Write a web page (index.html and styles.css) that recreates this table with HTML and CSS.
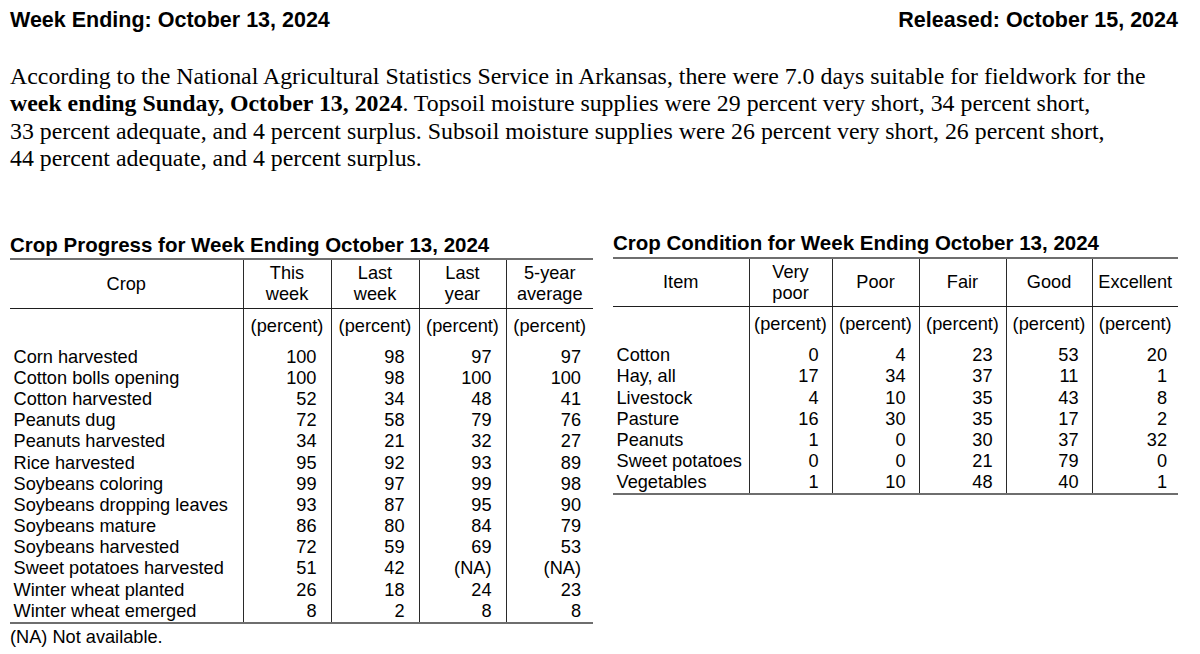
FILE: index.html
```html
<!DOCTYPE html>
<html lang="en">
<head>
<meta charset="utf-8">
<title>Arkansas Crop Progress</title>
<link rel="stylesheet" href="styles.css">
</head>
<body>
<div class="page">
  <header class="top">
    <div>Week Ending: October 13, 2024</div>
    <div>Released: October 15, 2024</div>
  </header>

  <p class="summary">According to the National Agricultural Statistics Service in Arkansas, there were 7.0 days suitable for fieldwork for the<br><b>week ending Sunday, October 13, 2024</b>. Topsoil moisture supplies were 29 percent very short, 34 percent short,<br>33 percent adequate, and 4 percent surplus. Subsoil moisture supplies were 26 percent very short, 26 percent short,<br>44 percent adequate, and 4 percent surplus.</p>

  <div class="tables">
    <section class="block block-progress">
      <h2 class="tbl-title">Crop Progress for Week Ending October 13, 2024</h2>
      <table class="tbl tbl-progress">
        <colgroup>
          <col class="c-name-l"><col class="c-num-l"><col class="c-num-l"><col class="c-num-l2"><col class="c-num-l2">
        </colgroup>
        <thead>
          <tr class="head">
            <th>Crop</th><th>This<br>week</th><th>Last<br>week</th><th>Last<br>year</th><th>5-year<br>average</th>
          </tr>
          <tr class="unit">
            <th></th><th>(percent)</th><th>(percent)</th><th>(percent)</th><th>(percent)</th>
          </tr>
        </thead>
        <tbody>
          <tr><td>Corn harvested</td><td>100</td><td>98</td><td>97</td><td>97</td></tr>
          <tr><td>Cotton bolls opening</td><td>100</td><td>98</td><td>100</td><td>100</td></tr>
          <tr><td>Cotton harvested</td><td>52</td><td>34</td><td>48</td><td>41</td></tr>
          <tr><td>Peanuts dug</td><td>72</td><td>58</td><td>79</td><td>76</td></tr>
          <tr><td>Peanuts harvested</td><td>34</td><td>21</td><td>32</td><td>27</td></tr>
          <tr><td>Rice harvested</td><td>95</td><td>92</td><td>93</td><td>89</td></tr>
          <tr><td>Soybeans coloring</td><td>99</td><td>97</td><td>99</td><td>98</td></tr>
          <tr><td>Soybeans dropping leaves</td><td>93</td><td>87</td><td>95</td><td>90</td></tr>
          <tr><td>Soybeans mature</td><td>86</td><td>80</td><td>84</td><td>79</td></tr>
          <tr><td>Soybeans harvested</td><td>72</td><td>59</td><td>69</td><td>53</td></tr>
          <tr><td>Sweet potatoes harvested</td><td>51</td><td>42</td><td>(NA)</td><td>(NA)</td></tr>
          <tr><td>Winter wheat planted</td><td>26</td><td>18</td><td>24</td><td>23</td></tr>
          <tr class="last"><td>Winter wheat emerged</td><td>8</td><td>2</td><td>8</td><td>8</td></tr>
        </tbody>
      </table>
      <p class="note">(NA) Not available.</p>
    </section>

    <section class="block block-condition">
      <h2 class="tbl-title">Crop Condition for Week Ending October 13, 2024</h2>
      <table class="tbl tbl-condition">
        <colgroup>
          <col class="c-name-r"><col class="c-num-r1"><col class="c-num-r2"><col class="c-num-r2"><col class="c-num-r3"><col class="c-num-r3">
        </colgroup>
        <thead>
          <tr class="head">
            <th>Item</th><th>Very<br>poor</th><th>Poor</th><th>Fair</th><th>Good</th><th>Excellent</th>
          </tr>
          <tr class="unit">
            <th></th><th>(percent)</th><th>(percent)</th><th>(percent)</th><th>(percent)</th><th>(percent)</th>
          </tr>
        </thead>
        <tbody>
          <tr><td>Cotton</td><td>0</td><td>4</td><td>23</td><td>53</td><td>20</td></tr>
          <tr><td>Hay, all</td><td>17</td><td>34</td><td>37</td><td>11</td><td>1</td></tr>
          <tr><td>Livestock</td><td>4</td><td>10</td><td>35</td><td>43</td><td>8</td></tr>
          <tr><td>Pasture</td><td>16</td><td>30</td><td>35</td><td>17</td><td>2</td></tr>
          <tr><td>Peanuts</td><td>1</td><td>0</td><td>30</td><td>37</td><td>32</td></tr>
          <tr><td>Sweet potatoes</td><td>0</td><td>0</td><td>21</td><td>79</td><td>0</td></tr>
          <tr class="last"><td>Vegetables</td><td>1</td><td>10</td><td>48</td><td>40</td><td>1</td></tr>
        </tbody>
      </table>
    </section>
  </div>
</div>
</body>
</html>
```

FILE: styles.css
```css
html, body {
  margin: 0;
  padding: 0;
  background: #ffffff;
}

body {
  font-family: "Liberation Sans", Arial, sans-serif;
  color: #000000;
}

.page {
  padding: 8px 22px 0 10px;
}

.top {
  display: flex;
  justify-content: space-between;
  font-weight: bold;
  font-size: 21.5px;
  line-height: 24px;
}

.summary {
  font-family: "Liberation Serif", "Times New Roman", serif;
  font-size: 23.85px;
  line-height: 27.3px;
  margin: 31px 0 0;
  white-space: nowrap;
}

.tables {
  display: flex;
  align-items: flex-start;
  gap: 20px;
  margin-top: 59px;
}

.block-progress {
  padding-top: 1.5px;
}

.tbl-title {
  margin: 0 0 2.5px;
  font-size: 20.5px;
  line-height: 23px;
  font-weight: bold;
  white-space: nowrap;
}

.tbl {
  border-collapse: collapse;
  table-layout: fixed;
  font-size: 18.2px;
  line-height: 21.17px;
}

.tbl-progress { width: 583px; }
.tbl-condition { width: 565px; }

.c-name-l { width: 233px; }
.c-num-l { width: 88px; }
.c-num-l2 { width: 87px; }

.c-name-r { width: 136px; }
.c-num-r1 { width: 83px; }
.c-num-r2 { width: 87px; }
.c-num-r3 { width: 86px; }

.tbl th {
  font-weight: normal;
  text-align: center;
  vertical-align: middle;
  padding: 0 2px;
  white-space: nowrap;
}

.tbl th + th,
.tbl td + td {
  border-left: 1px solid #2a2a2a;
}

.tbl .head th {
  border-top: 2px solid #6e6e6e;
  border-bottom: 1px solid #1e1e1e;
  padding-top: 3px;
  padding-bottom: 2px;
}

.tbl-condition .head th {
  padding-top: 3px;
  padding-bottom: 2px;
}

.tbl .unit th {
  padding-top: 7px;
  padding-bottom: 10px;
}

.tbl td {
  padding: 0 14px 0 4px;
  text-align: right;
  white-space: nowrap;
}

.tbl td:first-child {
  text-align: left;
  padding-left: 3.5px;
}

.tbl td:last-child {
  padding-right: 12px;
}

.tbl-condition td {
  padding-right: 13px;
}

.tbl-condition td:last-child {
  padding-right: 11px;
}

.tbl .last td {
  border-bottom: 2px solid #6e6e6e;
}

.note {
  margin: 3px 0 0;
  font-size: 18.2px;
  line-height: 21.17px;
}
```
